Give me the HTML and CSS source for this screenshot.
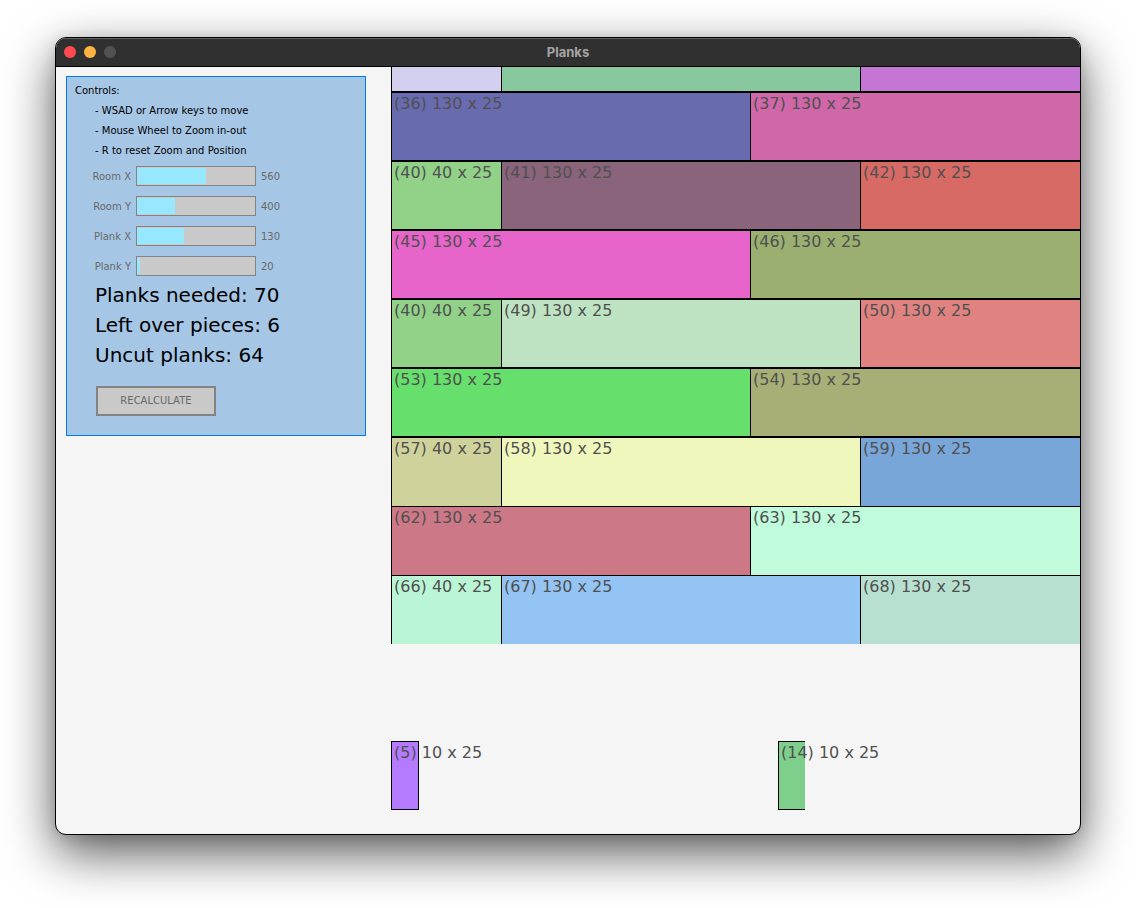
FILE: index.html
```html
<!DOCTYPE html>
<html lang="en">
<head>
<meta charset="utf-8">
<title>Planks</title>
<link rel="stylesheet" href="styles.css">
</head>
<body>
<div class="window">
  <header class="titlebar">
    <div class="lights">
      <button class="light close" aria-label="Close"></button>
      <button class="light minimize" aria-label="Minimize"></button>
      <button class="light zoom" aria-label="Zoom" disabled></button>
    </div>
    <h1 class="title">Planks</h1>
  </header>
  <div class="content">
    <aside class="side">
      <form class="panel">
        <p class="hint">Controls:</p>
        <ul class="hints">
          <li class="hint">- WSAD or Arrow keys to move</li>
          <li class="hint">- Mouse Wheel to Zoom in-out</li>
          <li class="hint">- R to reset Zoom and Position</li>
        </ul>
        <div class="sliders">
          <div class="field"><label for="room-x">Room X</label><input class="slider" id="room-x" type="range" min="200" max="800" value="560" style="--fill:58.5%"><output for="room-x">560</output></div>
          <div class="field"><label for="room-y">Room Y</label><input class="slider" id="room-y" type="range" min="200" max="800" value="400" style="--fill:32.2%"><output for="room-y">400</output></div>
          <div class="field"><label for="plank-x">Plank X</label><input class="slider" id="plank-x" type="range" min="10" max="310" value="130" style="--fill:39.8%"><output for="plank-x">130</output></div>
          <div class="field"><label for="plank-y">Plank Y</label><input class="slider" id="plank-y" type="range" min="10" max="310" value="20" style="--fill:2.5%"><output for="plank-y">20</output></div>
        </div>
        <div class="stats">
          <p>Planks needed: 70</p>
          <p>Left over pieces: 6</p>
          <p>Uncut planks: 64</p>
        </div>
        <button class="recalc" type="button">RECALCULATE</button>
      </form>
    </aside>
    <main class="room">
      <div class="row thirds cut-top"><div class="plank" style="background:#d3cfef"></div><div class="plank" style="background:#87c89e"></div><div class="plank" style="background:#c576d4"></div></div>
      <div class="row halves"><div class="plank" style="background:#696bb0">(36) 130 x 25</div><div class="plank" style="background:#cf67a8">(37) 130 x 25</div></div>
      <div class="row thirds"><div class="plank" style="background:#91d288">(40) 40 x 25</div><div class="plank" style="background:#89647b">(41) 130 x 25</div><div class="plank" style="background:#d86a65">(42) 130 x 25</div></div>
      <div class="row halves"><div class="plank" style="background:#e764cb">(45) 130 x 25</div><div class="plank" style="background:#9aaf70">(46) 130 x 25</div></div>
      <div class="row thirds"><div class="plank" style="background:#91d288">(40) 40 x 25</div><div class="plank" style="background:#bee3c2">(49) 130 x 25</div><div class="plank" style="background:#e0827f">(50) 130 x 25</div></div>
      <div class="row halves"><div class="plank" style="background:#66df6c">(53) 130 x 25</div><div class="plank" style="background:#a8af76">(54) 130 x 25</div></div>
      <div class="row thirds open"><div class="plank" style="background:#d0d29b">(57) 40 x 25</div><div class="plank" style="background:#f0f7bd">(58) 130 x 25</div><div class="plank" style="background:#79a6d8">(59) 130 x 25</div></div>
      <div class="row halves open"><div class="plank" style="background:#cd7887">(62) 130 x 25</div><div class="plank" style="background:#c0fbdc">(63) 130 x 25</div></div>
      <div class="row thirds open"><div class="plank" style="background:#baf5d5">(66) 40 x 25</div><div class="plank" style="background:#94c4f4">(67) 130 x 25</div><div class="plank" style="background:#b8e0d1">(68) 130 x 25</div></div>
      <div class="leftovers">
        <div class="piece closed" style="background:#b47aff">(5) 10 x 25</div>
        <div class="piece" style="background:#7dcf8b">(14) 10 x 25</div>
      </div>
    </main>
  </div>
</div>
</body>
</html>
```
FILE: styles.css
```css
* { box-sizing: border-box; }

body {
  margin: 0;
  min-height: 100vh;
  padding: 37px 55px 73px;
  display: flex;
  background: #fff;
  font-family: "DejaVu Sans", sans-serif;
}

p, ul, h1 { margin: 0; padding: 0; }

.window {
  flex: 1;
  display: flex;
  flex-direction: column;
  border: 1px solid #000;
  border-radius: 11px;
  overflow: hidden;
  background: #f5f5f5;
  box-shadow: 0 18px 50px rgba(0, 0, 0, 0.66), 0 2px 14px rgba(0, 0, 0, 0.12);
}

.titlebar {
  display: grid;
  grid-template-columns: 1fr auto 1fr;
  align-items: center;
  height: 29px;
  padding: 0 8px;
  background: #303030;
  border-bottom: 1px solid #000;
  box-shadow: inset 0 1px #626262;
}

.lights { display: flex; gap: 8px; }

.light {
  width: 12px;
  height: 12px;
  padding: 0;
  border: 0;
  border-radius: 50%;
}

.close { background: #ff4b50; }
.minimize { background: #ffb340; }
.zoom { background: #525252; }

.title {
  color: #a5a5a5;
  font: bold 13px/16px Inter, sans-serif;
}

.content { flex: 1; display: flex; }

.side { padding: 9px 25px 9px 10px; }

.panel {
  width: 300px;
  padding: 4px 8px 19px;
  border: 1px solid #0079f1;
  background: #a6c6e6;
}

.hint { font-size: 10px; line-height: 20px; color: #000; }
.hints { list-style: none; padding-left: 20px; }

.sliders {
  display: grid;
  gap: 10px;
  padding-top: 5px;
}

.field {
  display: grid;
  grid-template-columns: 56px 120px 1fr;
  column-gap: 5px;
  align-items: center;
  height: 20px;
  color: #686868;
  font-size: 10px;
}

.field label { text-align: right; }

.slider {
  appearance: none;
  width: 120px;
  height: 20px;
  margin: 0;
  border: 1px solid #838383;
  background: linear-gradient(#97e8ff, #97e8ff) left center / var(--fill) 16px no-repeat #c9c9c9;
}

.slider::-webkit-slider-thumb {
  appearance: none;
  width: 2px;
  height: 18px;
  background: transparent;
}

.stats {
  padding: 4px 0 16px 20px;
  font-size: 20px;
  line-height: 30px;
  color: #000;
}

.recalc {
  display: block;
  width: 120px;
  height: 30px;
  margin-left: 21px;
  padding: 0;
  border: 2px solid #838383;
  background: #c9c9c9;
  color: #686868;
  font: 10px/20px "DejaVu Sans", sans-serif;
}

.room { flex: 1; min-width: 0; }

.row { display: grid; height: 69px; }
.thirds { grid-template-columns: 110fr 359fr 220fr; }
.halves { grid-template-columns: 359fr 330fr; }
.cut-top { height: 25px; }

.plank {
  padding: 2px;
  border: solid #000;
  border-width: 1px 0 1px 1px;
  color: #505050;
  font-size: 16px;
  line-height: 18px;
  white-space: nowrap;
}

.cut-top .plank { border-top: 0; }
.open .plank { border-bottom: 0; }

.leftovers {
  display: grid;
  grid-template-columns: 387fr 302fr;
  padding: 97px 0 24px;
}

.piece {
  width: 27px;
  height: 69px;
  padding: 2px;
  border: 1px solid #000;
  border-right: 0;
  color: #505050;
  font-size: 16px;
  line-height: 18px;
  white-space: nowrap;
}

.closed { width: 28px; border-right: 1px solid #000; }
```
